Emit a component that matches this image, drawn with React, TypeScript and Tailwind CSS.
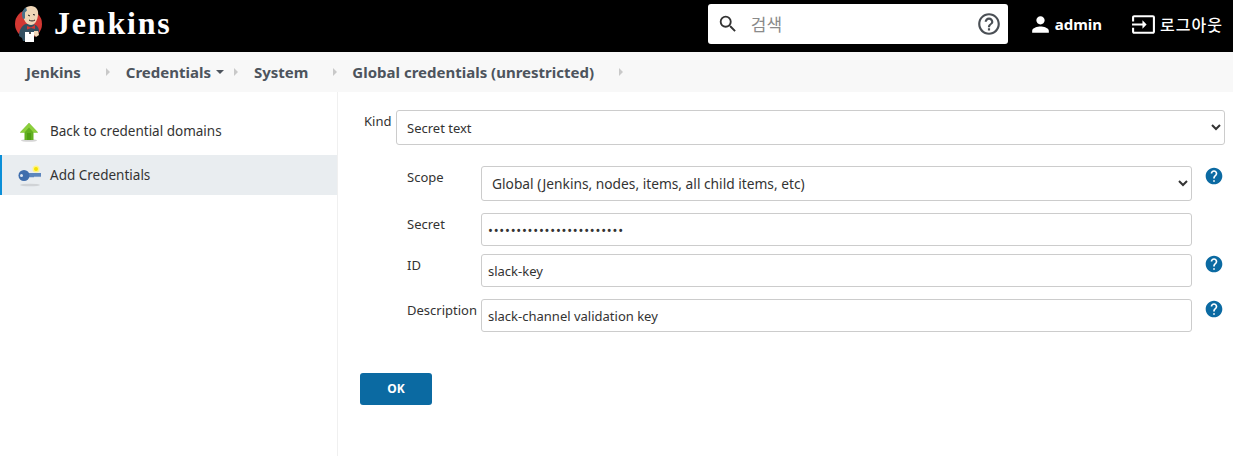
import React from "react";

const ui = "font-['Noto_Sans','Open_Sans',sans-serif]";
const field = "h-full w-full rounded-[3px] border border-[#ccc] bg-white text-[#333] outline-none";

function JenkinsLogo() {
  return (
    <svg width="30" height="38" viewBox="0 0 30 38" aria-hidden="true">
      <ellipse cx="14.500" cy="19" rx="13.500" ry="14" fill="#d33833" />
      <path d="M5 31c0-6 3-11 7-12l7 0c4 1 6 4 6 7l-1 3-5 2v5H9l-1-3z" fill="#335061" />
      <path d="M9 11c-1-6 3-10 8-10 5 0 8 4 7 9-.5 5-3 10-7 10-4 0-7-4-8-9z" fill="#f0d6b7" />
      <path d="M9 14c-2-5-1-9 3-11.500l1 3-2 2 0 6z" fill="#49728b" />
      <path d="M14 10l2 1M19 9.500l2 .500M15 15c2 1.300 4 1.300 6 0" stroke="#231f20" strokeWidth="1" fill="none" />
      <path d="M13 21l4 1.500 4-2.500v4l-4-1-4 1.500z" fill="#d33833" />
      <rect x="11" y="27" width="9" height="10" fill="#ffffff" />
      <path d="M20 26h4l1 4-3 2-2-2z" fill="#f0d6b7" />
      <circle cx="16" cy="28" r="1" fill="#231f20" />
    </svg>
  );
}

function UpArrow() {
  return (
    <svg width="20" height="20" viewBox="0 0 20 20" aria-hidden="true">
      <ellipse cx="10" cy="18.500" rx="8" ry="1.300" fill="#d5d5d5" />
      <path d="M10 1 19 10.500H14.500V18H5.500V10.500H1z" fill="#62b021" />
      <path d="M10 1 19 10.500H14.500L10 5.500 5.500 10.500H1z" fill="#8ccf3c" />
      <path d="M8 11h4v7H8z" fill="#4f9e14" />
    </svg>
  );
}

function KeyIcon() {
  return (
    <svg width="26" height="24" viewBox="0 0 26 24" aria-hidden="true">
      <ellipse cx="13" cy="21" rx="10" ry="1.300" fill="#d0d3d6" />
      <circle cx="19" cy="5" r="3.500" fill="#fff38a" />
      <circle cx="19" cy="5" r="2" fill="#f4e200" />
      <path d="M9 9h15v3.300l-1 1-1-1-1 1-1-1-1 1-1-1-1 1h-8z" fill="#5d86bd" />
      <circle cx="7" cy="11.500" r="5.500" fill="#3f6ead" />
      <circle cx="4.500" cy="11.500" r="1.500" fill="#dfe7f1" />
    </svg>
  );
}

function Caret() {
  return (
    <svg className="block" width="6" height="10" viewBox="0 0 6 10" aria-hidden="true">
      <path d="M1 1l4 4-4 4z" fill="#c9c9c9" />
    </svg>
  );
}

function HelpBlue() {
  return (
    <svg className="block" width="20" height="20" viewBox="0 0 24 24" fill="#0b6aa2" aria-hidden="true">
      <path d="M12 2C6.480 2 2 6.480 2 12s4.480 10 10 10 10-4.480 10-10S17.520 2 12 2zm1 17h-2v-2h2v2zm2.070-7.750l-.9.920C13.450 12.900 13 13.500 13 15h-2v-.5c0-1.100.450-2.100 1.170-2.830l1.240-1.260c.370-.36.590-.86.590-1.410 0-1.100-.9-2-2-2s-2 .9-2 2H8c0-2.210 1.790-4 4-4s4 1.790 4 4c0 .880-.36 1.680-.93 2.250z" />
    </svg>
  );
}

function Row({ label, height, mb, help, children }: { label: string; height: string; mb: string; help?: boolean; children: React.ReactNode }) {
  return (
    <div className={`flex ${mb}`}>
      <label className="w-[74px] shrink-0 pt-[2px] text-[13px] leading-[18px] text-[#333]">{label}</label>
      <div className={`w-[711px] shrink-0 ${height}`}>{children}</div>
      {help && (
        <div className="ml-[12px]">
          <HelpBlue />
        </div>
      )}
    </div>
  );
}

export default function App() {
  return (
    <div className={`flex h-[456px] flex-col overflow-hidden bg-white ${ui}`}>
      <header className="flex h-[52px] shrink-0 items-center bg-black pb-[4px] pl-[14px] pr-[10px]">
        <JenkinsLogo />
        <span className="mb-[3px] ml-[10px] font-['Liberation_Serif',serif] text-[32px] font-bold leading-none tracking-[1.8px] text-white">Jenkins</span>
        <div className="ml-auto flex h-[40px] w-[300px] items-center rounded-[3px] bg-white pl-[9px] pr-[6px]">
          <svg width="22" height="22" viewBox="0 0 24 24" fill="#333" aria-hidden="true">
            <path d="M15.500 14h-.79l-.28-.27A6.471 6.471 0 0 0 16 9.500 6.500 6.500 0 1 0 9.500 16c1.610 0 3.090-.59 4.230-1.570l.27.280v.79l5 4.990L20.490 19l-4.990-5zm-6 0C7.010 14 5 11.990 5 9.500S7.010 5 9.500 5 14 7.010 14 9.500 11.990 14 9.500 14z" />
          </svg>
          <input
            placeholder="검색"
            className="ml-[12px] min-w-0 flex-1 bg-transparent font-['Noto_Sans_CJK_KR',sans-serif] text-[17px] outline-none placeholder:text-[#8a8a8a]"
          />
          <svg width="26" height="26" viewBox="0 0 24 24" fill="#4a4f55" aria-hidden="true">
            <path d="M11 18h2v-2h-2v2zm1-16C6.480 2 2 6.480 2 12s4.480 10 10 10 10-4.480 10-10S17.520 2 12 2zm0 18c-4.410 0-8-3.590-8-8s3.590-8 8-8 8 3.590 8 8-3.590 8-8 8zm0-14c-2.210 0-4 1.790-4 4h2c0-1.100.9-2 2-2s2 .9 2 2c0 2-3 1.750-3 5h2c0-2.250 3-2.500 3-5 0-2.210-1.790-4-4-4z" />
          </svg>
        </div>
        <div className="ml-[20px] flex items-center text-white">
          <svg width="25" height="25" viewBox="0 0 24 24" fill="#fff" aria-hidden="true">
            <path d="M12 12c2.210 0 4-1.790 4-4s-1.790-4-4-4-4 1.790-4 4 1.790 4 4 4zm0 2c-2.670 0-8 1.340-8 4v2h16v-2c0-2.660-5.330-4-8-4z" />
          </svg>
          <span className="ml-[2px] text-[15px] font-bold">admin</span>
        </div>
        <div className="ml-[29px] flex items-center text-white">
          <svg width="25" height="25" viewBox="0 0 24 24" fill="#fff" aria-hidden="true">
            <path d="M21 3.010H3c-1.100 0-2 .9-2 2V9h2V4.990h18v14.030H3V15H1v4.010c0 1.100.9 1.980 2 1.980h18c1.100 0 2-.88 2-1.980v-14a2 2 0 0 0-2-2zM11 16l4-4-4-4v3H1v2h10v3z" />
          </svg>
          <span className="ml-[4px] font-['Noto_Sans_CJK_KR',sans-serif] text-[16px] font-medium tracking-[1px]">로그아웃</span>
        </div>
      </header>

      <nav className="flex h-[40px] shrink-0 items-center bg-[#f8f8f8] pl-[26px] text-[15px] font-bold text-[#4d545d]">
        <span>Jenkins</span>
        <span className="ml-[24px]"><Caret /></span>
        <span className="ml-[15px]">Credentials</span>
        <svg className="ml-[5px]" width="8" height="4" viewBox="0 0 8 4" aria-hidden="true">
          <path d="M0 0h8L4 4z" fill="#4d545d" />
        </svg>
        <span className="ml-[9px]"><Caret /></span>
        <span className="ml-[15px]">System</span>
        <span className="ml-[24px]"><Caret /></span>
        <span className="ml-[14px]">Global credentials (unrestricted)</span>
        <span className="ml-[24px]"><Caret /></span>
      </nav>

      <div className="flex flex-1">
        <aside className="w-[338px] shrink-0 border-r border-[#f0f0f0] pt-[19px] text-[13.500px] text-[#333]">
          <div className="flex h-[40px] items-center pl-[19px] pt-[1px]">
            <UpArrow />
            <span className="ml-[11px]">Back to credential domains</span>
          </div>
          <div className="mt-[4px] flex h-[40px] items-center border-l-2 border-[#0b8fd8] bg-[#e9edf0] pl-[15px] pt-[1px]">
            <KeyIcon />
            <span className="ml-[7px]">Add Credentials</span>
          </div>
        </aside>

        <main className="flex-1 pt-[18px]">
          <div className="mb-[21px] flex">
            <label className="ml-[26px] w-[32px] shrink-0 pt-[2px] text-[13px] leading-[18px] text-[#333]">Kind</label>
            <div className="h-[35px] w-[829px] shrink-0">
              <select defaultValue="text" className={`${field} pl-[6px] text-[13px]`}>
                <option value="text">Secret text</option>
              </select>
            </div>
          </div>
          <div className="ml-[69px]">
            <Row label="Scope" height="h-[35px]" mb="mb-[12px]" help>
              <select defaultValue="global" className={`${field} pl-[6px] pr-[2px] text-[13.750px]`}>
                <option value="global">Global (Jenkins, nodes, items, all child items, etc)</option>
              </select>
            </Row>
            <Row label="Secret" height="h-[33px]" mb="mb-[8px]">
              <input type="password" defaultValue="abcdefghijklmnopqrstuvwx" className={`${field} px-[6px] text-[13px] tracking-[0.77px]`} />
            </Row>
            <Row label="ID" height="h-[33px]" mb="mb-[12px]" help>
              <input defaultValue="slack-key" className={`${field} px-[6px] text-[13px]`} />
            </Row>
            <Row label="Description" height="h-[33px]" mb="mb-[41px]" help>
              <input defaultValue="slack-channel validation key" className={`${field} px-[6px] text-[13px]`} />
            </Row>
          </div>
          <button className="ml-[22px] h-[32px] w-[72px] rounded-[3px] bg-[#0b6aa2] text-[12px] font-bold text-white">OK</button>
        </main>
      </div>
    </div>
  );
}
